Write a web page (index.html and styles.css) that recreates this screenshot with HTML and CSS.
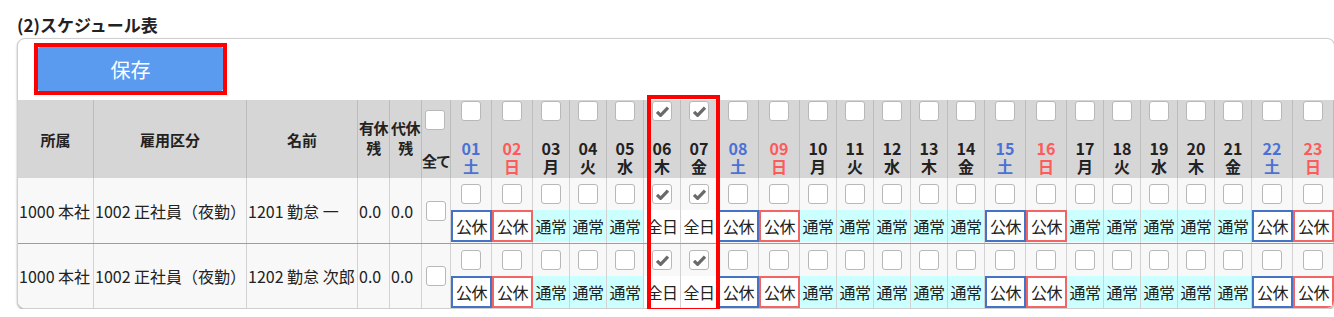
FILE: index.html
```html
<!DOCTYPE html>
<html lang="ja">
<head>
  <meta charset="UTF-8">
  <meta name="viewport" content="width=device-width, initial-scale=1.0">
  <title>スケジュール表</title>
  <link rel="stylesheet" href="styles.css">
</head>
<body>

  <!-- Section title -->
  <div class="section-title">(2)スケジュール表</div>

  <div class="sheet">
    <div class="panel">
      <!-- Toolbar -->
      <div class="toolbar">
        <div class="save-mark">
          <button class="save-button">保存</button>
        </div>
      </div>

      <!-- Schedule grid (filled by script) -->
      <div class="schedule" id="schedule"></div>
    </div>

    <!-- Red annotation over 06 / 07 -->
    <div class="highlight"></div>
  </div>

  <script>
    const dows = ['土', '日', '月', '火', '水', '木', '金'];
    const dayCount = 23;
    const fullDays = [6, 7];

    const employees = [
      { dept: '1000 本社', type: '1002 正社員（夜勤）', name: '1201 勤怠 一', paid: '0.0', comp: '0.0' },
      { dept: '1000 本社', type: '1002 正社員（夜勤）', name: '1202 勤怠 次郎', paid: '0.0', comp: '0.0' }
    ];

    const tick = '<svg width="15" height="13" viewBox="0 0 15 13"><path d="M2 6.8l3.6 3.6L13 2.6" fill="none" stroke="#6a6a6a" stroke-width="3.2" stroke-linejoin="round"/></svg>';

    function checkbox(checked) {
      return '<span class="check">' + (checked ? tick : '') + '</span>';
    }

    function dayInfo(d) {
      const dow = dows[(d - 1) % 7];
      let kind = '';
      if (dow === '土') kind = 'sat';
      if (dow === '日') kind = 'sun';
      return { dow: dow, kind: kind, label: String(d).padStart(2, '0'), full: fullDays.includes(d) };
    }

    // Header row
    let html = '<div class="row row-head">';
    html += '<div class="cell c-dept head-text">所属</div>';
    html += '<div class="cell c-type head-text">雇用区分</div>';
    html += '<div class="cell c-name head-text">名前</div>';
    html += '<div class="cell c-rest head-text rest">有休<br>残</div>';
    html += '<div class="cell c-rest head-text rest">代休<br>残</div>';
    html += '<div class="cell c-all all-head">' + checkbox(false) + '<span class="all-label">全て</span></div>';
    for (let d = 1; d <= dayCount; d++) {
      const info = dayInfo(d);
      html += '<div class="cell c-day day-head ' + (info.kind ? 'weekend ' + info.kind : '') + '">' +
        checkbox(info.full) +
        '<div class="day-label"><div>' + info.label + '</div><div>' + info.dow + '</div></div></div>';
    }
    html += '</div>';

    // Employee rows
    employees.forEach(function (emp) {
      html += '<div class="row row-data">';
      html += '<div class="cell c-dept data-text">' + emp.dept + '</div>';
      html += '<div class="cell c-type data-text">' + emp.type + '</div>';
      html += '<div class="cell c-name data-text">' + emp.name + '</div>';
      html += '<div class="cell c-rest data-text">' + emp.paid + '</div>';
      html += '<div class="cell c-rest data-text">' + emp.comp + '</div>';
      html += '<div class="cell c-all all-data">' + checkbox(false) + '</div>';
      for (let d = 1; d <= dayCount; d++) {
        const info = dayInfo(d);
        let status = '<div class="status normal">通常</div>';
        if (info.kind) status = '<div class="status off ' + info.kind + '">公休</div>';
        if (info.full) status = '<div class="status full">全日</div>';
        html += '<div class="cell c-day day-data ' + (info.kind ? 'weekend' : '') + '">' +
          '<div class="day-check">' + checkbox(info.full) + '</div>' + status + '</div>';
      }
      html += '</div>';
    });

    document.getElementById('schedule').innerHTML = html;
  </script>

</body>
</html>
```

FILE: styles.css
```css
/* General */
body {
  margin: 0;
  font-family: "Noto Sans CJK JP", "Noto Sans", sans-serif;
  font-size: 15px;
  color: #222;
  background-color: #fff;
  overflow: hidden;
}

.section-title {
  margin: 15px 0 0 17px;
  font-size: 17px;
  font-weight: bold;
  line-height: 20px;
}

/* Panel */
.sheet {
  position: relative;
  padding: 3px 0 0 17px;
}

.panel {
  width: max-content;
  border: 1px solid #cfcfcf;
  border-radius: 8px;
  overflow: hidden;
  background-color: #fff;
  box-shadow: 0 1px 2px rgba(0, 0, 0, 0.35);
}

.toolbar {
  height: 61px;
  padding: 4px 0 0 16px;
  box-sizing: border-box;
}

.save-mark {
  display: inline-block;
  border: 4px solid #f00;
}

.save-button {
  display: block;
  width: 185px;
  height: 44px;
  border: none;
  border-radius: 2px;
  background-color: #5b9bef;
  color: #fff;
  font-family: inherit;
  font-size: 20px;
}

.highlight {
  position: absolute;
  left: 647px;
  top: 60px;
  width: 73px;
  height: 217px;
  box-sizing: border-box;
  border: 4px solid #f00;
}

/* Grid rows */
.row {
  display: flex;
}

.cell {
  flex: none;
  box-sizing: border-box;
  border-right: 1px solid #d2d2d2;
}

.c-dept { width: 76px; }
.c-type { width: 153px; }
.c-name { width: 111px; }
.c-rest { width: 32px; }
.c-all  { width: 29px; }
.c-day  { width: 37px; }
.c-day.weekend { width: 41px; }

/* Header */
.row-head {
  height: 78px;
  background-color: #d6d6d6;
}

.row-head .cell {
  border-right-color: #bcbcbc;
}

.head-text {
  display: flex;
  align-items: center;
  justify-content: center;
  font-weight: bold;
}

.head-text.rest {
  text-align: center;
  line-height: 20px;
  letter-spacing: -0.5px;
  padding-bottom: 3px;
}

.all-head {
  display: flex;
  flex-direction: column;
  align-items: flex-start;
  padding: 10px 0 0 3px;
  font-weight: bold;
}

.all-label {
  margin: 21px 0 0 -3px;
  line-height: 20px;
  white-space: nowrap;
  letter-spacing: -1px;
}

.day-head {
  display: flex;
  flex-direction: column;
  align-items: center;
  justify-content: space-between;
  padding: 1px 0 3px;
}

.day-label {
  font-size: 16px;
  font-weight: bold;
  line-height: 18px;
  text-align: center;
}

.day-head.sat .day-label { color: #4a72d6; }
.day-head.sun .day-label { color: #ff5a5a; }

/* Checkbox */
.check {
  display: flex;
  align-items: center;
  justify-content: center;
  width: 20px;
  height: 20px;
  box-sizing: border-box;
  border: 1px solid #b8b8b8;
  border-radius: 3px;
  background-color: #fff;
}

/* Data rows */
.row-data {
  height: 65px;
  background-color: #f8f8f8;
  border-bottom: 1px solid #9e9e9e;
  font-size: 16px;
}

.row-data:last-child {
  height: 64px;
  border-bottom: none;
}

.data-text {
  display: flex;
  align-items: center;
  padding-left: 1px;
  white-space: nowrap;
  overflow: hidden;
}

.all-data {
  display: flex;
  align-items: center;
  justify-content: center;
}

.day-data {
  display: flex;
  flex-direction: column;
}

.day-check {
  height: 32px;
  display: flex;
  align-items: center;
  justify-content: center;
}

.status {
  height: 32px;
  display: flex;
  align-items: center;
  justify-content: center;
  box-sizing: border-box;
  white-space: nowrap;
  letter-spacing: -0.5px;
}

.status.normal { background-color: #ccffff; }
.status.full { background-color: #fff; }

.status.off {
  background-color: #fff;
  margin-right: -1px;
}

.status.off.sat { border: 2px solid #4472c4; }
.status.off.sun { border: 2px solid #f26565; }
```
